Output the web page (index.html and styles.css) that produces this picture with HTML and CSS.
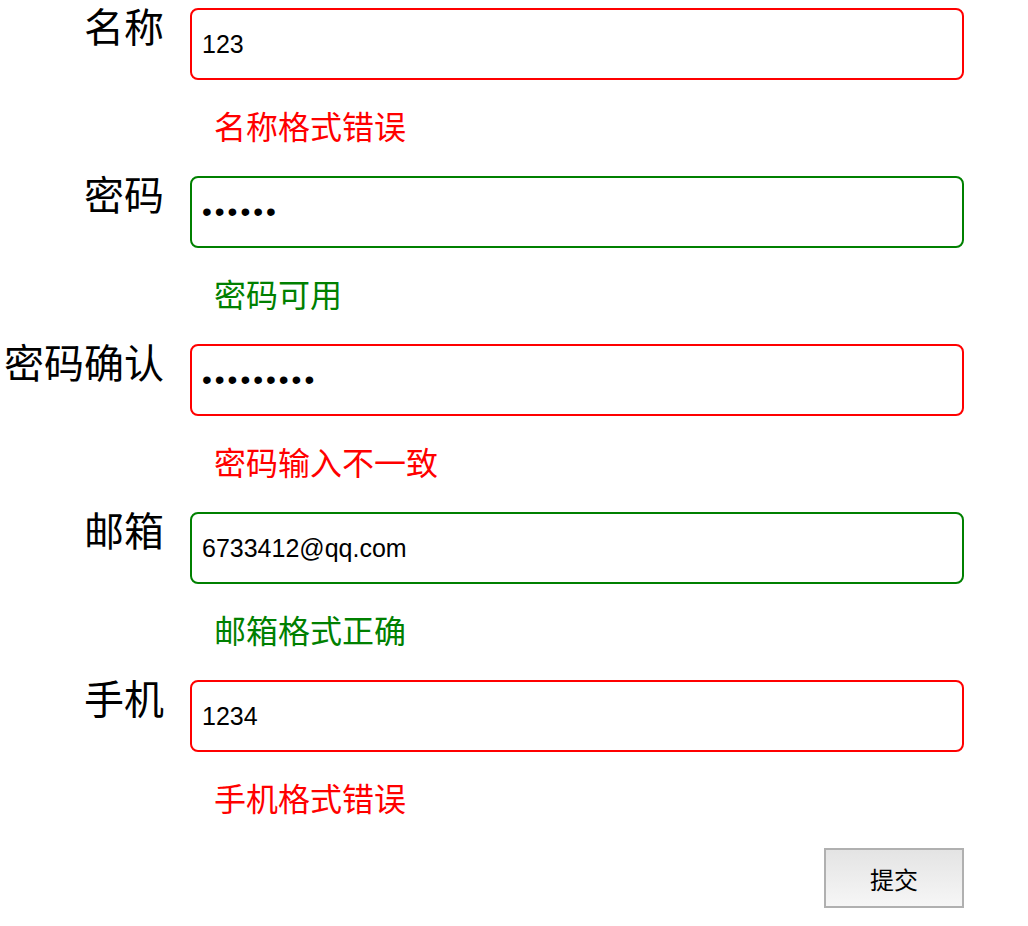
FILE: index.html
```html
<!DOCTYPE html>
<html lang="zh">
<head>
<meta charset="utf-8">
<title>表单</title>
<link rel="stylesheet" href="styles.css">
</head>
<body>
<form class="form">
  <div class="field">
    <div class="row">
      <label class="label">名称</label>
      <input class="input bad" type="text" value="123">
    </div>
    <div class="msg bad-text">名称格式错误</div>
  </div>
  <div class="field">
    <div class="row">
      <label class="label">密码</label>
      <input class="input good pw" type="password" value="123456">
    </div>
    <div class="msg good-text">密码可用</div>
  </div>
  <div class="field">
    <div class="row">
      <label class="label">密码确认</label>
      <input class="input bad pw" type="password" value="123456789">
    </div>
    <div class="msg bad-text">密码输入不一致</div>
  </div>
  <div class="field">
    <div class="row">
      <label class="label">邮箱</label>
      <input class="input good" type="text" value="6733412@qq.com">
    </div>
    <div class="msg good-text">邮箱格式正确</div>
  </div>
  <div class="field">
    <div class="row">
      <label class="label">手机</label>
      <input class="input bad" type="text" value="1234">
    </div>
    <div class="msg bad-text">手机格式错误</div>
  </div>
  <div class="actions">
    <button class="submit" type="button">提交</button>
  </div>
</form>
</body>
</html>
```

FILE: styles.css
```css
html, body {
  margin: 0;
  padding: 0;
  background: #ffffff;
}
body {
  font-family: "Noto Sans CJK SC", "Liberation Sans", sans-serif;
  color: #000;
}
.form {
  padding-top: 5px;
  width: 964px;
}
.field {
  display: flex;
  flex-direction: column;
  margin-bottom: 24px;
}
.row {
  display: grid;
  grid-template-columns: 164px 774px;
  column-gap: 26px;
  align-items: start;
}
.label {
  text-align: right;
  font-size: 40px;
  line-height: 40px;
  white-space: nowrap;
}
.input {
  box-sizing: border-box;
  width: 774px;
  height: 72px;
  margin-top: 3px;
  border: 2px solid;
  border-radius: 8px;
  padding: 0 10px;
  font-family: "Liberation Sans", "Noto Sans CJK SC", sans-serif;
  font-size: 25px;
  color: #000;
  outline: none;
  background: #fff;
}
.pw {
  letter-spacing: 3px;
  font-size: 28px;
}
.bad { border-color: #ff0000; }
.good { border-color: #008000; }
.msg {
  margin-left: 214px;
  margin-top: 21px;
  font-size: 32px;
  line-height: 48px;
}
.bad-text { color: #ff0000; }
.good-text { color: #008000; }
.actions {
  display: flex;
  justify-content: flex-end;
  margin-top: 27px;
}
.submit {
  width: 140px;
  height: 60px;
  border: 2px solid #b0b0b0;
  background: linear-gradient(#e4e4e4, #f6f6f6);
  font-family: "Noto Sans CJK SC", sans-serif;
  font-size: 24px;
  color: #000;
  padding: 0;
}
```
